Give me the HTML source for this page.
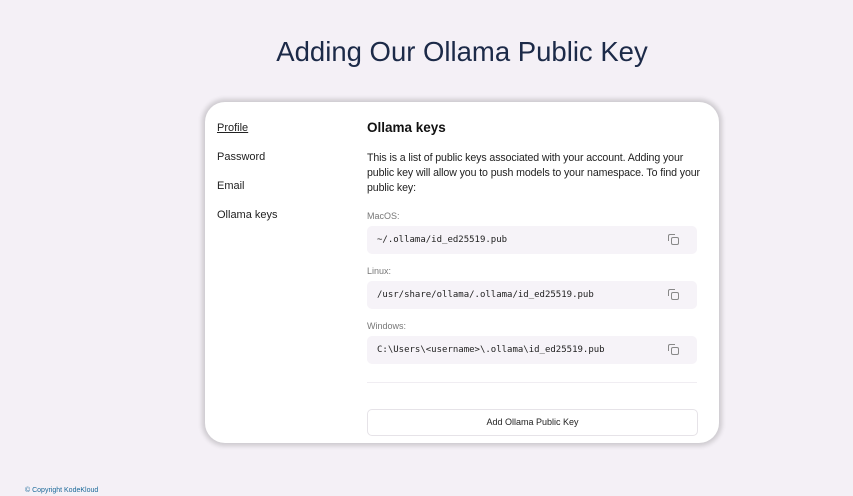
<!DOCTYPE html><html><head><style>
body{margin:0;width:853px;height:496px;background:#f4f0f6;font-family:"Liberation Sans",sans-serif;position:relative;overflow:hidden}
.t{position:absolute;left:0;width:924px;text-align:center;top:36px;font-size:27.5px;color:#1c2a48}
.card{position:absolute;left:205px;top:102px;width:514px;height:341px;background:#fff;border-radius:20px;box-shadow:0 0 5px 3px rgba(0,0,0,.16)}
.a{position:absolute;font-size:11px;color:#222}
.lab{position:absolute;left:367px;font-size:9px;color:#777}
.code{position:absolute;left:367px;width:330px;height:28px;background:#f6f3f8;border-radius:5px;font-family:"DejaVu Sans Mono",monospace;font-size:9px;color:#222;line-height:28px;box-sizing:border-box;padding-left:10px}
.ic{position:absolute;right:18px;top:11px;width:6px;height:6px;border:1.1px solid #888;border-radius:2px}
.ic:before{content:"";position:absolute;left:-4px;top:-4px;width:6px;height:6px;border-left:1.1px solid #888;border-top:1.1px solid #888;border-radius:2px 0 0 0}
</style></head><body>
<div class="t">Adding Our Ollama Public Key</div>
<div class="card"></div>
<div class="a" style="left:217px;top:122px;text-decoration:underline">Profile</div>
<div class="a" style="left:217px;top:151px">Password</div>
<div class="a" style="left:217px;top:180px">Email</div>
<div class="a" style="left:217px;top:209px">Ollama keys</div>
<div class="a" style="left:367px;top:120px;font-size:13.5px;font-weight:bold;color:#111">Ollama keys</div>
<div class="a" style="left:367px;top:151px;width:335px;line-height:15px;font-size:10.6px;letter-spacing:-0.1px">This is a list of public keys associated with your account. Adding your public key will allow you to push models to your namespace. To find your public key:</div>
<div class="lab" style="top:211px">MacOS:</div>
<div class="code" style="top:226px">~/.ollama/id_ed25519.pub<span class="ic"></span></div>
<div class="lab" style="top:266px">Linux:</div>
<div class="code" style="top:281px">/usr/share/ollama/.ollama/id_ed25519.pub<span class="ic"></span></div>
<div class="lab" style="top:321px">Windows:</div>
<div class="code" style="top:336px">C:\Users\&lt;username&gt;\.ollama\id_ed25519.pub<span class="ic"></span></div>
<div style="position:absolute;left:367px;top:382px;width:330px;border-top:1px solid #f0edf2"></div>
<div style="position:absolute;left:367px;top:409px;width:329px;height:25px;border:1px solid #e6e3e8;border-radius:5px;text-align:center;line-height:25px;font-size:9px;color:#222">Add Ollama Public Key</div>
<div style="position:absolute;left:25px;top:487px;font-size:7px;color:#1b6a9a">© Copyright KodeKloud</div>
</body></html>
